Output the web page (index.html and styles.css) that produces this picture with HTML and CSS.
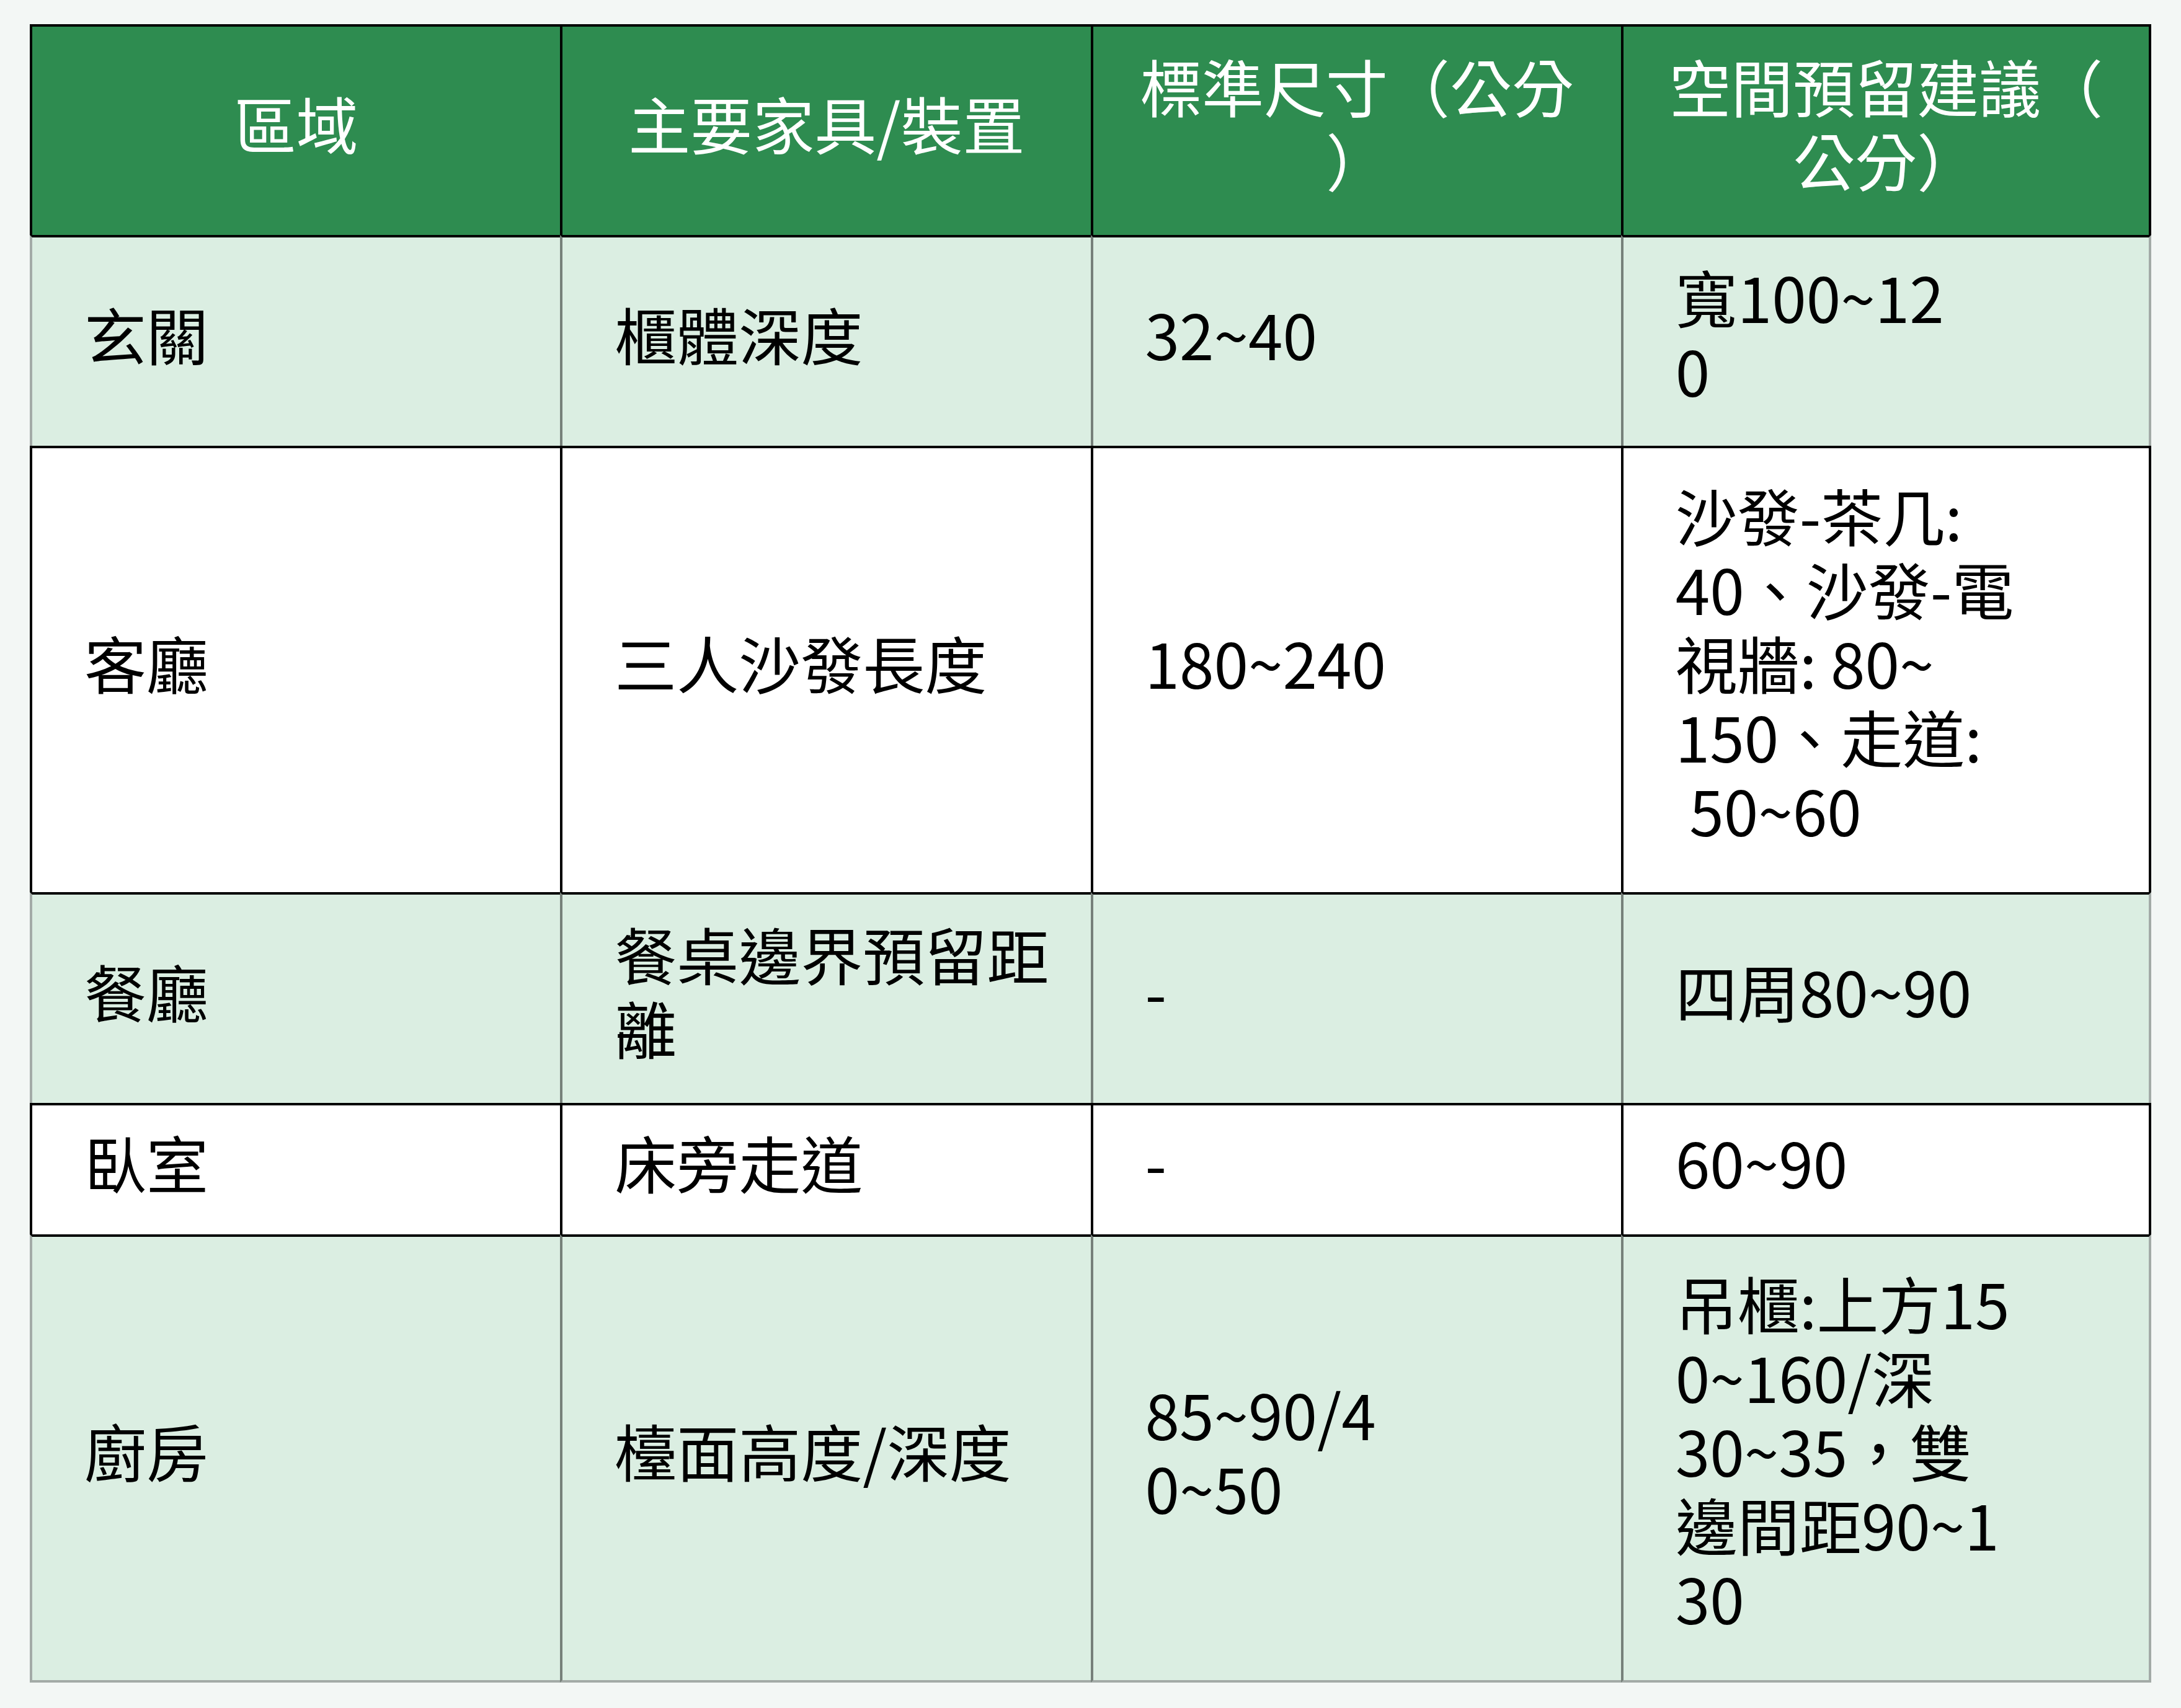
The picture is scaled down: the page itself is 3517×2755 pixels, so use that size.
FILE: index.html
```html
<!DOCTYPE html>
<html lang="zh-Hant">
<head>
<meta charset="utf-8">
<title>空間尺寸建議表</title>
<link rel="stylesheet" href="styles.css">
</head>
<body>
<div class="page">
  <table class="sizes">
    <thead>
      <tr class="row-head">
        <th>區域</th>
        <th>主要家具/裝置</th>
        <th>標準尺寸（公分<br>）</th>
        <th>空間預留建議（<br>公分）</th>
      </tr>
    </thead>
    <tbody>
      <tr class="shade row-short">
        <td>玄關</td>
        <td>櫃體深度</td>
        <td>32~40</td>
        <td>寬100~12<br>0</td>
      </tr>
      <tr class="plain row-tall">
        <td>客廳</td>
        <td>三人沙發長度</td>
        <td>180~240</td>
        <td>沙發-茶几:<br>40、沙發-電<br>視牆: 80~<br>150、走道:<br>&nbsp;50~60</td>
      </tr>
      <tr class="shade row-short">
        <td>餐廳</td>
        <td>餐桌邊界預留距<br>離</td>
        <td>-</td>
        <td>四周80~90</td>
      </tr>
      <tr class="plain row-single">
        <td>臥室</td>
        <td>床旁走道</td>
        <td>-</td>
        <td>60~90</td>
      </tr>
      <tr class="shade row-last">
        <td>廚房</td>
        <td>檯面高度/深度</td>
        <td>85~90/4<br>0~50</td>
        <td>吊櫃:上方15<br>0~160/深<br>30~35，雙<br>邊間距90~1<br>30</td>
      </tr>
    </tbody>
  </table>
</div>
</body>
</html>
```

FILE: styles.css
```css
html, body {
  margin: 0;
  padding: 0;
  background: #f3f7f5;
}

body {
  font-family: "Noto Sans CJK TC", "Noto Sans CJK SC", "Noto Sans", sans-serif;
  color: #000;
}

.page {
  padding: 39px 48px 42px 48px;
}

.sizes {
  border-collapse: separate;
  border-spacing: 0;
  table-layout: fixed;
  width: 3421px;
  font-size: 100px;
  line-height: 119px;
}

.sizes th,
.sizes td {
  box-sizing: border-box;
  border-left: 4px solid #000;
  border-top: 4px solid #000;
  padding: 0 10px 28px 84px;
  vertical-align: middle;
  font-weight: 400;
  white-space: nowrap;
}

.sizes tr > :last-child {
  border-right: 4px solid #000;
}

.sizes th {
  background: #2e8c50;
  color: #fff;
  text-align: center;
  padding-left: 10px;
  padding-right: 10px;
}

.sizes td {
  text-align: left;
}

.plain td {
  background: #fff;
}

.shade td {
  background: #dbeee2;
  border-left-color: #76807a;
}

.shade td:first-child {
  border-left-color: #a3aba7;
}

.shade td:last-child {
  border-right-color: #a3aba7;
}

.row-last td {
  border-bottom: 4px solid #a3aba7;
}

.row-head {
  height: 340px;
}

.row-short {
  height: 340px;
}

.row-tall {
  height: 720px;
}

.row-single {
  height: 212px;
}

.row-last {
  height: 723px;
}
```
